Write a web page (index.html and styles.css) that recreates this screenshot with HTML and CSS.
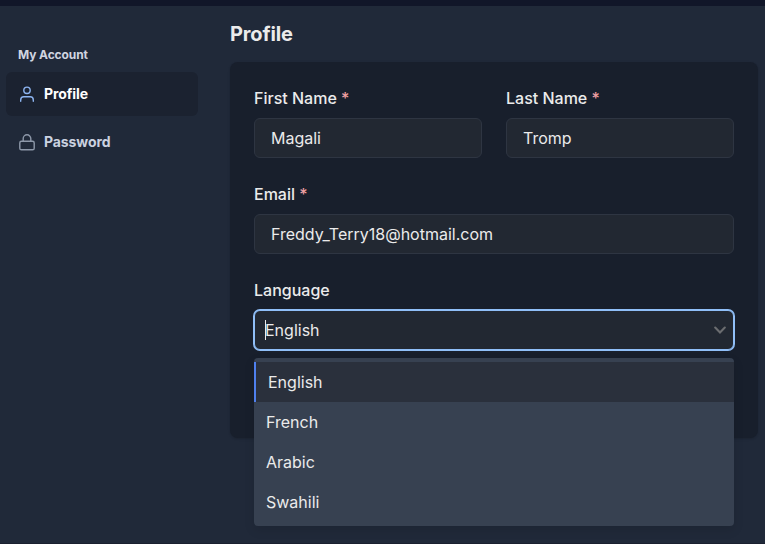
FILE: index.html
```html
<!DOCTYPE html>
<html lang="en">
<head>
<meta charset="utf-8">
<title>Profile</title>
<link rel="stylesheet" href="styles.css">
</head>
<body>
<div class="page">
  <nav class="sidebar">
    <h2 class="nav-heading">My Account</h2>
    <a class="nav-item active">
      <svg class="nav-icon" viewBox="0 0 18 18"><circle cx="9" cy="5.3" r="3.2"/><path d="M2.7 16.2v-1.3a3.1 3.1 0 0 1 3.1-3.1h6.4a3.1 3.1 0 0 1 3.1 3.1v1.3"/></svg>
      <span>Profile</span>
    </a>
    <a class="nav-item">
      <svg class="nav-icon" viewBox="0 0 18 18"><rect x="1.8" y="8.3" width="14.4" height="8.5" rx="1.6"/><path d="M5.2 8.2V5.6a3.8 3.8 0 0 1 7.6 0v2.6"/></svg>
      <span>Password</span>
    </a>
  </nav>
  <main class="content">
    <h1 class="title">Profile</h1>
    <form class="card">
      <div class="field">
        <label class="label">First Name <span class="required">*</span></label>
        <div class="input">Magali</div>
      </div>
      <div class="field">
        <label class="label">Last Name <span class="required">*</span></label>
        <div class="input">Tromp</div>
      </div>
      <div class="field wide">
        <label class="label">Email <span class="required">*</span></label>
        <div class="input">Freddy_Terry18@hotmail.com</div>
      </div>
      <div class="field wide">
        <label class="label">Language</label>
        <div class="input select">
          <span class="caret"></span><span>English</span>
          <svg class="chevron" viewBox="0 0 12 8"><path d="M1.2 1.6L6 6.4l4.8-4.8"/></svg>
          <div class="menu">
            <div class="option selected">English</div>
            <div class="option">French</div>
            <div class="option">Arabic</div>
            <div class="option">Swahili</div>
          </div>
        </div>
      </div>
    </form>
  </main>
</div>
</body>
</html>
```
FILE: styles.css
```css
* {
  box-sizing: border-box;
}

body {
  margin: 0;
  font: 16px/24px Inter, sans-serif;
  color: #ebebeb;
  background: #202939;
}

.page {
  display: flex;
  height: 544px;
  overflow: hidden;
  border-top: 6px solid #111629;
  border-bottom: 1px solid #1a202f;
}

.sidebar {
  width: 198px;
  padding: 39px 0 0 6px;
}

.nav-heading {
  margin: 0 0 7px 12px;
  font-size: 12px;
  font-weight: 700;
  letter-spacing: -0.1px;
  line-height: 20px;
  color: #d0d5e0;
}

.nav-item {
  display: flex;
  align-items: center;
  gap: 8px;
  height: 44px;
  margin-bottom: 4px;
  padding-left: 12px;
  border-radius: 6px;
  font-size: 14px;
  font-weight: 700;
  letter-spacing: -0.1px;
  color: #cbd2e0;
}

.nav-item.active {
  color: #fff;
  background: #1b2230;
}

.nav-icon {
  width: 18px;
  height: 18px;
  fill: none;
  stroke: #8d98a9;
  stroke-width: 1.4;
  stroke-linecap: round;
  stroke-linejoin: round;
}

.active .nav-icon {
  stroke: #8db4f0;
}

.content {
  width: 528px;
  margin-left: 32px;
}

.title {
  margin: 16px 0;
  font-size: 20px;
  font-weight: 700;
  letter-spacing: -0.15px;
  line-height: 24px;
}

.card {
  display: grid;
  grid-template-columns: 1fr 1fr;
  align-content: start;
  gap: 24px;
  height: 376px;
  padding: 24px;
  border-radius: 8px;
  background: #181f2c;
  box-shadow: 0 1px 3px rgba(0, 0, 0, 0.1), 0 1px 2px rgba(0, 0, 0, 0.06);
}

.wide {
  grid-column: span 2;
}

.label {
  display: block;
  margin-bottom: 8px;
  font-weight: 500;
}

.required {
  color: #f0a0a3;
}

.input {
  display: flex;
  align-items: center;
  height: 40px;
  padding: 0 16px;
  border: 1px solid #2e3542;
  border-radius: 6px;
  background: #222832;
}

.select {
  position: relative;
  padding: 0 7px 0 10px;
  border-color: #90bff8;
  box-shadow: 0 0 0 1px #90bff8;
}

.caret {
  width: 1px;
  height: 20px;
  margin-right: -1px;
  background: #ebebeb;
}

.chevron {
  width: 12px;
  height: 8px;
  margin-left: auto;
  fill: none;
  stroke: #6b6d70;
  stroke-width: 2.1;
  stroke-linecap: round;
}

.menu {
  position: absolute;
  top: 47px;
  left: -1px;
  right: -1px;
  padding: 4px 0;
  border-radius: 4px;
  background: #374151;
  box-shadow: 0 4px 11px rgba(0, 0, 0, 0.1);
}

.option {
  padding: 8px 12px;
}

.option.selected {
  border-left: 2px solid #4f80ee;
  background: #2a303c;
}
```
